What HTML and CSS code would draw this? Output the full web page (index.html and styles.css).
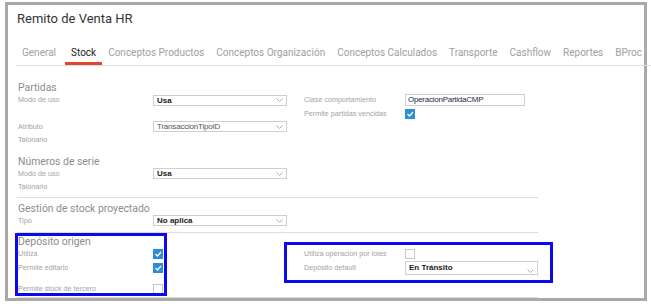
FILE: index.html
```html
<!DOCTYPE html>
<html lang="es">
<head>
    <meta charset="UTF-8">
    <title>Remito de Venta HR</title>
    <link rel="stylesheet" href="styles.css">
</head>
<body>
    <div class="frame">
        <h1 class="title">Remito de Venta HR</h1>
        <ul class="tabs">
            <li>General</li>
            <li class="active">Stock</li>
            <li>Conceptos Productos</li>
            <li>Conceptos Organización</li>
            <li>Conceptos Calculados</li>
            <li>Transporte</li>
            <li>Cashflow</li>
            <li>Reportes</li>
            <li>BProc</li>
        </ul>

        <div class="content">
            <section class="group group-first">
                <h2>Partidas</h2>
                <div class="row row-tall">
                    <label>Modo de uso</label>
                    <div class="select"><span>Usa</span><svg class="chev" width="7" height="4"><polyline points="0.5,0.5 3.5,3.5 6.5,0.5"/></svg></div>
                    <span></span>
                    <label>Clase comportamiento</label>
                    <div class="input">OperacionPartidaCMP</div>
                </div>
                <div class="row">
                    <span></span><span></span><span></span>
                    <label>Permite partidas vencidas</label>
                    <div class="check on"><svg width="8" height="8"><polyline points="1.5,4 3.5,6 7,2"/></svg></div>
                </div>
                <div class="row">
                    <label>Atributo</label>
                    <div class="select disabled"><span>TransaccionTipoID</span><svg class="chev" width="7" height="4"><polyline points="0.5,0.5 3.5,3.5 6.5,0.5"/></svg></div>
                </div>
                <div class="row">
                    <label>Talonario</label>
                </div>

                <h2 class="sub">Números de serie</h2>
                <div class="row">
                    <label>Modo de uso</label>
                    <div class="select"><span>Usa</span><svg class="chev" width="7" height="4"><polyline points="0.5,0.5 3.5,3.5 6.5,0.5"/></svg></div>
                </div>
                <div class="row">
                    <label>Talonario</label>
                </div>
            </section>

            <section class="group group-projected">
                <h2>Gestión de stock proyectado</h2>
                <div class="row">
                    <label>Tipo</label>
                    <div class="select"><span>No aplica</span><svg class="chev" width="7" height="4"><polyline points="0.5,0.5 3.5,3.5 6.5,0.5"/></svg></div>
                </div>
            </section>

            <section class="group group-deposit">
                <h2>Depósito origen</h2>
                <div class="row">
                    <label>Utiliza</label>
                    <div class="check on"><svg width="8" height="8"><polyline points="1.5,4 3.5,6 7,2"/></svg></div>
                    <span></span>
                    <label>Utiliza operacion por lotes</label>
                    <div class="check"></div>
                </div>
                <div class="row row-select">
                    <label>Permite editarlo</label>
                    <div class="check on"><svg width="8" height="8"><polyline points="1.5,4 3.5,6 7,2"/></svg></div>
                    <span></span>
                    <label>Depósito default</label>
                    <div class="select select-tall"><span>En Tránsito</span><svg class="chev" width="7" height="4"><polyline points="0.5,0.5 3.5,3.5 6.5,0.5"/></svg></div>
                </div>
                <div class="row row-last">
                    <label>Permite stock de tercero</label>
                    <div class="check"></div>
                </div>
            </section>
        </div>
    </div>

    <!-- highlight boxes drawn over the form -->
    <div class="mark mark-origin"></div>
    <div class="mark mark-default"></div>
</body>
</html>
```

FILE: styles.css
```css
body { margin: 0; background-color: #fff; font-family: Roboto, "Liberation Sans", sans-serif; }

.frame {
    width: 642px;
    margin: 2px 0 0 5px;
    box-sizing: border-box;
    border: 3px solid #a9a9a9;
}

.title { margin: 6px 0 0 9px; font-size: 13px; line-height: 15px; font-weight: 400; color: #333; }

.tabs {
    display: flex;
    list-style: none;
    margin: 21px -12px 0 8px;
    padding: 0;
    border-bottom: 1px solid #ddd;
}
.tabs li {
    font-size: 10px;
    line-height: 12px;
    padding: 0 6px 3px;
    border-bottom: 3px solid transparent;
    color: #a0a0a0;
    white-space: nowrap;
}
.tabs li:first-child { padding-right: 9px; }
.tabs li.active { color: #222; border-bottom-color: #e2462c; }

.content { margin-left: 9px; width: 521px; }

.group { border-bottom: 1px solid #ddd; }
.group-first { padding: 17px 0 4px; }
.group-projected { padding: 6px 0 5px; }
.group-deposit { padding: 4px 0 3px; }

h2 { margin: 0; padding-left: 1px; font-size: 10.4px; line-height: 10px; font-weight: 400; color: #8c8c8c; }
h2.sub { margin-top: 11px; }

.row {
    display: grid;
    grid-template-columns: 136px 134px 16px 102px 133px;
    height: 13px;
    align-items: center;
}
.row-tall { height: 14px; }
.row-select { height: 16px; }
.row-last { height: 18px; align-items: end; }

label {
    padding-left: 1px;
    font-family: "Liberation Sans", Arial, sans-serif;
    font-size: 7.2px;
    line-height: 10px;
    color: #a3a3a3;
    white-space: nowrap;
}

.select {
    height: 11px;
    box-sizing: border-box;
    border: 1px solid #cfcfcf;
    padding: 0 3px;
    display: flex;
    align-items: center;
    justify-content: space-between;
    font-family: "Liberation Sans", Arial, sans-serif;
    font-size: 8px;
    font-weight: bold;
    color: #1a1a1a;
}
.select.disabled { font-weight: normal; color: #555; letter-spacing: -0.2px; }
.select-tall { height: 14px; align-items: flex-start; padding-top: 1px; }
.select-tall .chev { align-self: flex-end; margin-bottom: 1px; }
.chev polyline { fill: none; stroke: #8fb2d8; stroke-width: 1; }

.input {
    width: 120px;
    height: 12px;
    box-sizing: border-box;
    border: 1px solid #cfcfcf;
    padding: 0 2px;
    font-family: "Liberation Sans", Arial, sans-serif;
    font-size: 8px;
    letter-spacing: -0.25px;
    line-height: 10px;
    color: #1c2a4e;
}

.check {
    width: 10px;
    height: 10px;
    box-sizing: border-box;
    border: 1px solid #c6c6c6;
    background-color: #fff;
    display: flex;
    align-items: center;
    justify-content: center;
}
.check.on { background-color: #2c8fd6; border-color: #2c8fd6; }
.check polyline { fill: none; stroke: #fff; stroke-width: 1.2; }

.mark {
    position: absolute;
    box-sizing: border-box;
    border: 3px solid #0a0af2;
}
.mark-origin { left: 15px; top: 233px; width: 152px; height: 63px; }
.mark-default { left: 284px; top: 242px; width: 269px; height: 41px; }
```
